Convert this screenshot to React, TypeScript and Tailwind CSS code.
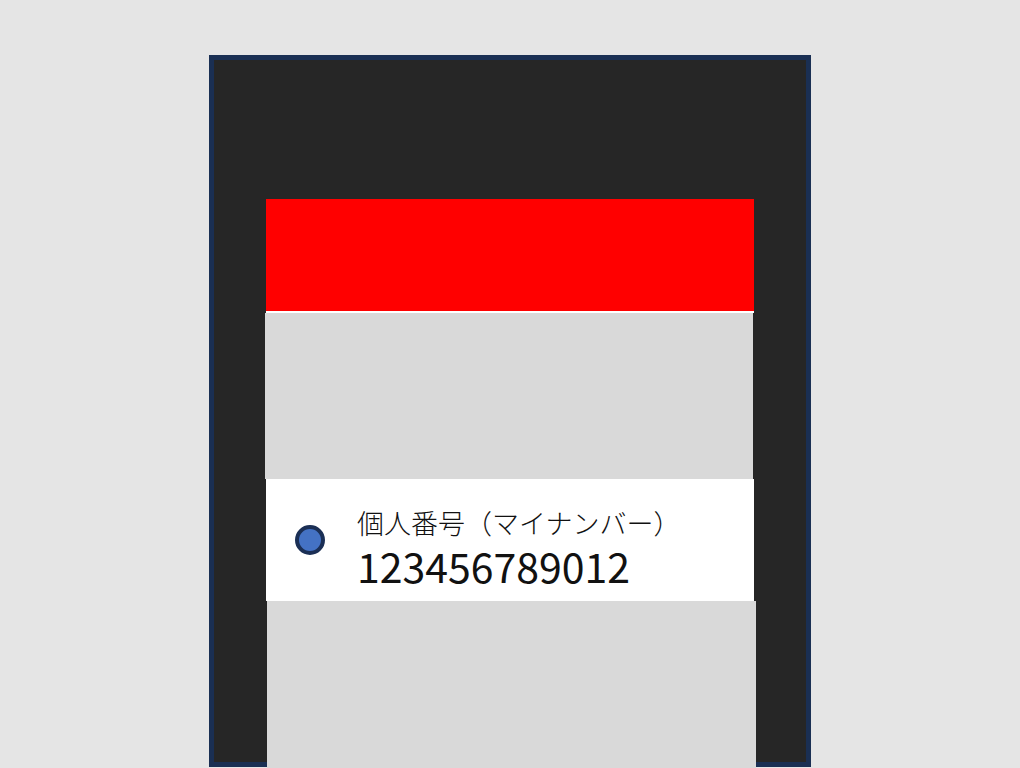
export default function App() {
  return (
    <div className="min-h-[768px] w-full bg-[#e5e5e5] pt-[55px] pl-[209px] overflow-hidden h-[768px]">
      <div className="w-[602px] h-[712px] border-[5px] border-[#1a2f53] bg-[#262626] pt-[139px] pl-[52px]">
        <div className="w-[488px] h-[112px] bg-[#ff0000]" />
        <div className="w-[488px] h-[2px] bg-white" />
        <div className="-ml-px w-[488px] h-[166px] bg-[#d9d9d9]" />
        <div
          className="w-[488px] h-[122px] bg-white flex items-center"
          style={{ fontFamily: '"Noto Sans CJK JP", "Noto Sans", sans-serif' }}
        >
          <div className="ml-[29px] w-[30px] h-[30px] rounded-full border-[4px] border-[#1b2f55] bg-[#4472c4] shrink-0" />
          <div className="ml-[32px] h-[122px] pt-[29px] flex flex-col text-[#111]">
            <span className="text-[27px] leading-[30px] font-light">個人番号（マイナンバー）</span>
            <span className="mt-[6px] text-[41px] leading-[42px]">123456789012</span>
          </div>
        </div>
        <div className="ml-px w-[489px] h-[200px] bg-[#d9d9d9]" />
      </div>
    </div>
  );
}
